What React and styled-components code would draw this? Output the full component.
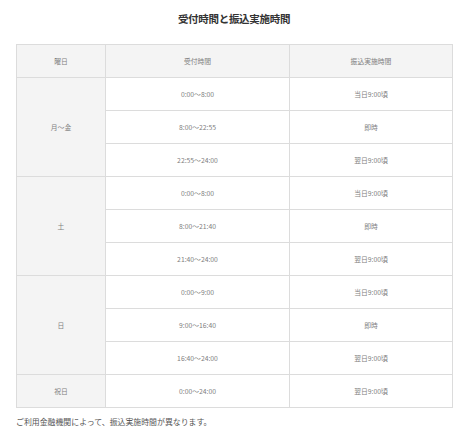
import React from 'react';
import styled, { createGlobalStyle } from 'styled-components';

const GlobalStyle = createGlobalStyle`
    body {
        margin: 0;
        background: #ffffff;
        font-family: 'Noto Sans CJK JP', 'Noto Sans', sans-serif;
    }
`

const Page = styled.div`
    width: 475px;
    padding: 11px 23px 0 16px;
    box-sizing: border-box;
`

const Title = styled.h2`
    margin: 0 0 18px 0;
    font-size: 10.5px;
    line-height: 15px;
    font-weight: 700;
    color: #333;
    text-align: center;
    letter-spacing: -0.3px;
`

const Table = styled.table`
    width: 436px;
    border-collapse: collapse;
    table-layout: fixed;
    border: 1px solid #dcdcdc;
`

const Cell = styled.td`
    height: 32px;
    padding: 0;
    border: 1px solid #dcdcdc;
    text-align: center;
    vertical-align: middle;
    font-size: 6.8px;
    color: #808080;
    background: ${props => (props.$shaded ? '#f4f4f4' : '#fff')};
`

const HeadCell = styled(Cell).attrs({ as: 'th' })`
    font-weight: 400;
    background: #f4f4f4;
`

const Note = styled.p`
    margin: 8px 0 0 0;
    font-size: 7.9px;
    line-height: 12px;
    color: #555;
`

const schedule = [
    {
        day: '月〜金',
        rows: [
            ['0:00〜8:00', '当日9:00頃'],
            ['8:00〜22:55', '即時'],
            ['22:55〜24:00', '翌日9:00頃'],
        ],
    },
    {
        day: '土',
        rows: [
            ['0:00〜8:00', '当日9:00頃'],
            ['8:00〜21:40', '即時'],
            ['21:40〜24:00', '翌日9:00頃'],
        ],
    },
    {
        day: '日',
        rows: [
            ['0:00〜9:00', '当日9:00頃'],
            ['9:00〜16:40', '即時'],
            ['16:40〜24:00', '翌日9:00頃'],
        ],
    },
    {
        day: '祝日',
        rows: [['0:00〜24:00', '翌日9:00頃']],
    },
];

const App = () => {
    return (
        <Page>
            <GlobalStyle />
            <Title>受付時間と振込実施時間</Title>
            <Table>
                <colgroup>
                    <col style={{ width: '89px' }} />
                    <col style={{ width: '184px' }} />
                    <col style={{ width: '163px' }} />
                </colgroup>
                <thead>
                    <tr>
                        <HeadCell>曜日</HeadCell>
                        <HeadCell>受付時間</HeadCell>
                        <HeadCell>振込実施時間</HeadCell>
                    </tr>
                </thead>
                <tbody>
                    {schedule.map(group =>
                        group.rows.map((row, i) => (
                            <tr key={group.day + i}>
                                {i === 0 && (
                                    <Cell $shaded rowSpan={group.rows.length}>
                                        {group.day}
                                    </Cell>
                                )}
                                <Cell>{row[0]}</Cell>
                                <Cell>{row[1]}</Cell>
                            </tr>
                        ))
                    )}
                </tbody>
            </Table>
            <Note>ご利用金融機関によって、振込実施時間が異なります。</Note>
        </Page>
    )
}

export default App;
